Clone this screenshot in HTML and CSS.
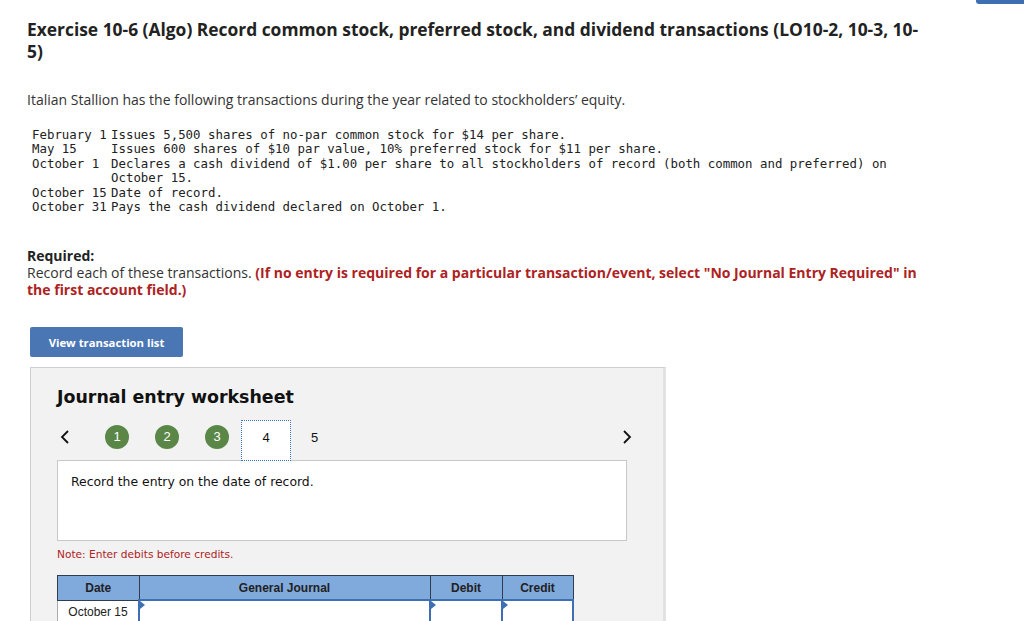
FILE: index.html
```html
<!DOCTYPE html>
<html>
<head>
<meta charset="utf-8">
<link rel="stylesheet" href="styles.css">
</head>
<body>
<div class="topbar"></div>
<main class="page">
  <h1 class="title">Exercise 10-6 (Algo) Record common stock, preferred stock, and dividend transactions (LO10-2, 10-3, 10-<wbr>5)</h1>
  <p class="intro">Italian Stallion has the following transactions during the year related to stockholders’ equity.</p>
  <div class="trans">
    <div class="trow"><span class="tdate">February 1</span><span class="tdesc">Issues 5,500 shares of no-par common stock for $14 per share.</span></div>
    <div class="trow"><span class="tdate">May 15</span><span class="tdesc">Issues 600 shares of $10 par value, 10% preferred stock for $11 per share.</span></div>
    <div class="trow"><span class="tdate">October 1</span><span class="tdesc">Declares a cash dividend of $1.00 per share to all stockholders of record (both common and preferred) on October 15.</span></div>
    <div class="trow"><span class="tdate">October 15</span><span class="tdesc">Date of record.</span></div>
    <div class="trow"><span class="tdate">October 31</span><span class="tdesc">Pays the cash dividend declared on October 1.</span></div>
  </div>
  <div class="required">
    <div class="req-label">Required:</div>
    <div class="req-text">Record each of these transactions. <span class="req-note">(If no entry is required for a particular transaction/event, select "No Journal Entry Required" in the first account field.)</span></div>
  </div>
  <button class="view-btn">View transaction list</button>
  <section class="worksheet">
    <h2 class="ws-title">Journal entry worksheet</h2>
    <div class="ws-nav">
      <svg class="chev" width="12" height="16" viewBox="0 0 12 16"><polyline points="9,2 3,8 9,14" fill="none" stroke="#111" stroke-width="1.8"/></svg>
      <div class="steps">
        <span class="step done">1</span>
        <span class="step done">2</span>
        <span class="step done">3</span>
        <span class="step current">4</span>
        <span class="step plain">5</span>
      </div>
      <svg class="chev right" width="12" height="16" viewBox="0 0 12 16"><polyline points="3,2 9,8 3,14" fill="none" stroke="#111" stroke-width="1.8"/></svg>
    </div>
    <div class="ws-box">Record the entry on the date of record.</div>
    <div class="ws-note">Note: Enter debits before credits.</div>
    <table class="journal">
      <thead>
        <tr><th class="c-date">Date</th><th class="c-gj">General Journal</th><th class="c-dr">Debit</th><th class="c-cr">Credit</th></tr>
      </thead>
      <tbody>
        <tr><td class="c-date">October 15</td><td class="inp"><span class="flag"></span></td><td class="inp"><span class="flag"></span></td><td class="inp"><span class="flag"></span></td></tr>
      </tbody>
    </table>
  </section>
</main>
</body>
</html>
```
FILE: styles.css
```css
html, body {
  margin: 0;
  padding: 0;
  background: #fff;
  overflow: hidden;
}
body {
  font-family: "Open Sans", "Lato", sans-serif;
  color: #333;
}
.topbar {
  position: absolute;
  top: 0;
  right: 0;
  width: 48px;
  height: 4px;
  background: #3f6fb3;
  border-bottom-left-radius: 3px;
}
.page {
  padding: 18px 0 0 27px;
  width: 900px;
}
.title {
  margin: 0;
  width: 900px;
  font-size: 17.4px;
  line-height: 22px;
  font-weight: 700;
  color: #222;
}
.intro {
  margin: 29px 0 0;
  font-size: 14px;
  line-height: 18px;
  color: #333;
}
.trans {
  margin: 19px 0 0 5px;
  font-family: "DejaVu Sans Mono", monospace;
  font-size: 12.4px;
  line-height: 14.4px;
  color: #222;
}
.trow {
  display: flex;
}
.tdate {
  width: 79px;
  flex: none;
}
.tdesc {
  width: 790px;
}
.required {
  margin-top: 33px;
  font-size: 14px;
  line-height: 17px;
  color: #333;
  width: 895px;
}
.req-label {
  font-weight: 700;
  color: #222;
}
.req-note {
  font-weight: 700;
  color: #ad2222;
}
.view-btn {
  display: block;
  margin: 29px 0 0 3px;
  width: 153px;
  height: 30px;
  border: none;
  border-radius: 2px;
  background: #4a76b4;
  color: #fff;
  font-family: "Open Sans", sans-serif;
  font-weight: 700;
  font-size: 11.3px;
  padding: 0;
}
.worksheet {
  margin: 10px 0 0 3px;
  width: 606px;
  height: 260px;
  background: #f2f2f2;
  border: 1px solid #cfcfcf;
  border-right: 3px solid #e2e2e2;
  padding: 0 0 0 26px;
}
.ws-title {
  margin: 18px 0 0;
  font-family: "DejaVu Sans", Verdana, sans-serif;
  font-size: 17.4px;
  line-height: 22px;
  font-weight: 700;
  color: #111;
}
.ws-nav {
  display: flex;
  align-items: flex-start;
  height: 40px;
  margin-top: 12px;
  width: 576px;
}
.chev {
  margin: 9px 0 0 2px;
  flex: none;
}
.chev.right {
  margin-left: auto;
}
.steps {
  display: flex;
  align-items: flex-start;
  margin-left: 34px;
}
.step {
  display: flex;
  justify-content: center;
  font-family: "Liberation Sans", Arial, sans-serif;
  font-size: 13px;
  line-height: 14px;
  color: #111;
}
.step.done {
  width: 24px;
  height: 24px;
  margin-top: 5px;
  align-items: center;
  border-radius: 50%;
  background: #5a8747;
  color: #fff;
  margin-right: 26px;
}
.step.done:nth-child(3) {
  margin-right: 12px;
}
.step.current {
  width: 48px;
  height: 29px;
  padding-top: 10px;
  background: #fff;
  border: 1px dotted #3b6fc0;
  position: relative;
  z-index: 1;
}
.step.plain {
  margin-left: 20px;
  padding-top: 11px;
}
.ws-box {
  width: 555px;
  height: 56px;
  background: #fff;
  border: 1px solid #c8c8c8;
  padding: 13px 0 10px 13px;
  font-family: "DejaVu Sans", Verdana, sans-serif;
  font-size: 12.4px;
  line-height: 16px;
  color: #111;
}
.ws-note {
  margin-top: 7px;
  font-family: "DejaVu Sans", Verdana, sans-serif;
  font-size: 10.6px;
  line-height: 12px;
  color: #b0231f;
}
.journal {
  margin-top: 15px;
  border-collapse: collapse;
  font-family: "Liberation Sans", Arial, sans-serif;
  font-size: 12px;
}
.journal th {
  height: 23px;
  background: #80a9dc;
  border: 1px solid #2f3d4d;
  color: #222;
  font-weight: 700;
  padding: 0;
}
.journal td {
  height: 20px;
  padding: 0;
  background: #fff;
}
.journal td.c-date {
  text-align: center;
  color: #222;
  border-left: 1px solid #aaa;
}
.journal .c-date { width: 80px; }
.journal .c-gj { width: 290px; }
.journal .c-dr { width: 71px; }
.journal .c-cr { width: 70px; }
.journal td.inp {
  border: 2px solid #3f6fb3;
  position: relative;
}
.flag {
  position: absolute;
  left: 0;
  top: 0;
  width: 0;
  height: 0;
  border-top: 4px solid transparent;
  border-bottom: 4px solid transparent;
  border-left: 5px solid #3f6fb3;
}
```
